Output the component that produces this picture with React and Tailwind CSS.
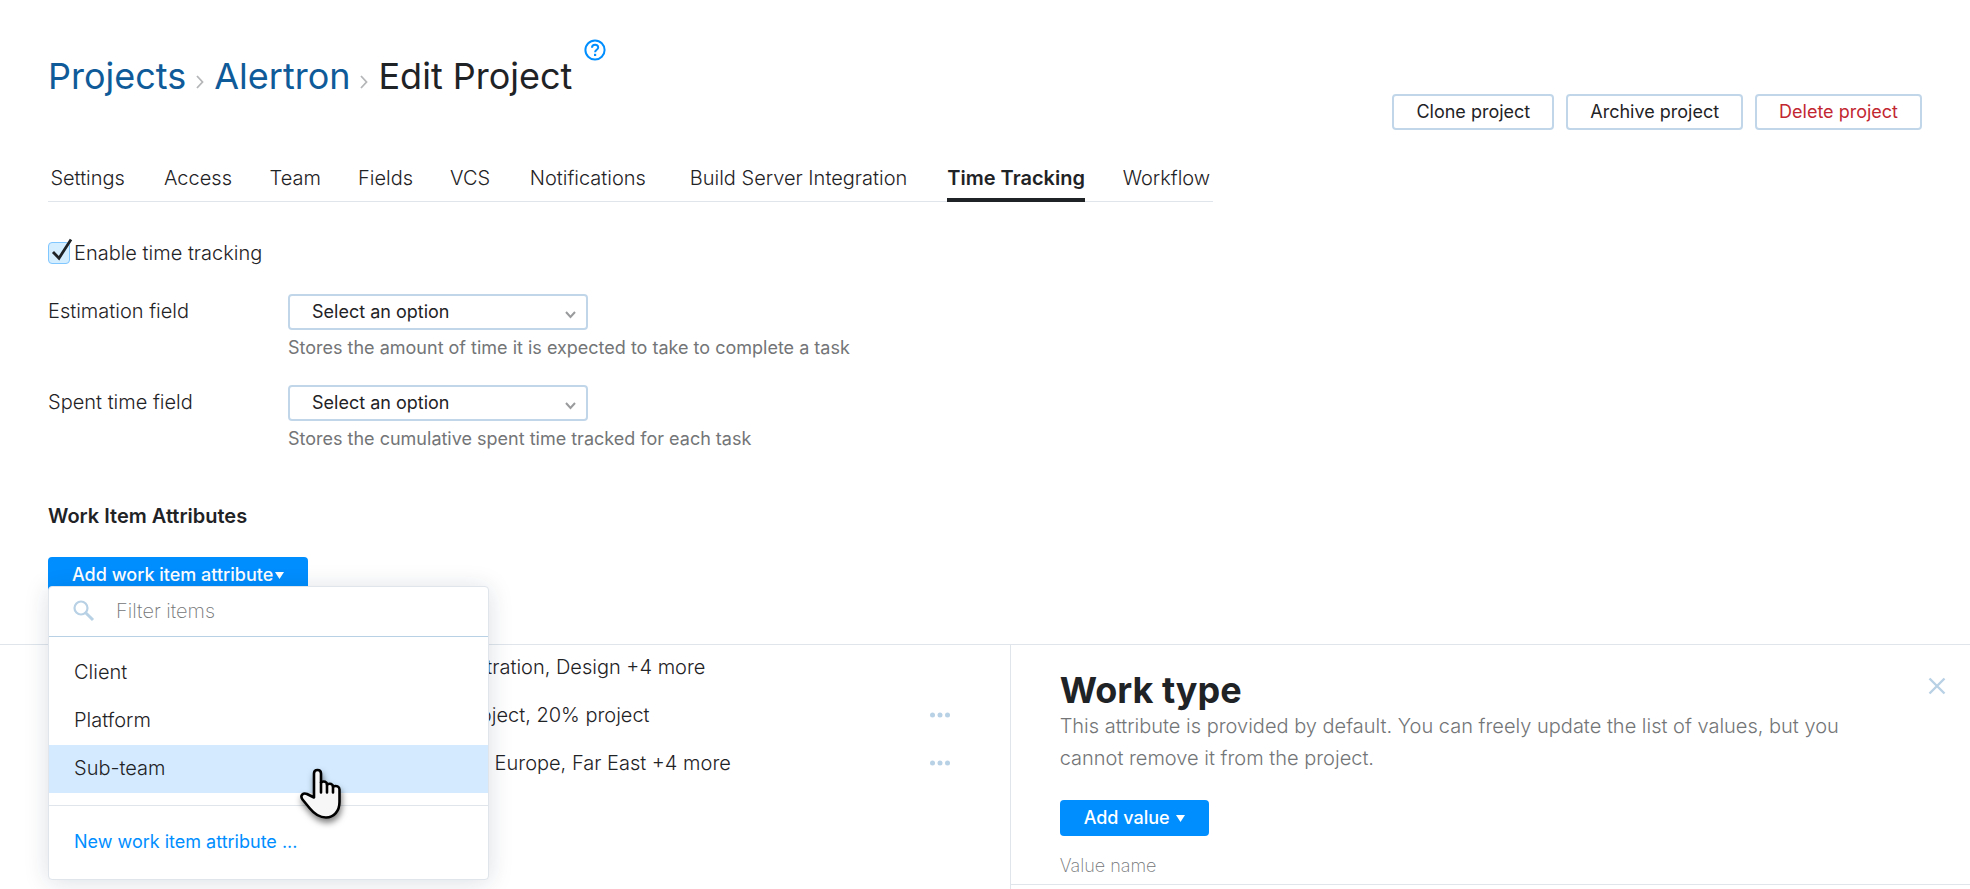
const tabs = [
  'Settings',
  'Access',
  'Team',
  'Fields',
  'VCS',
  'Notifications',
  'Build Server Integration',
  'Time Tracking',
  'Workflow',
];

const fields = [
  {
    id: 'estimation',
    label: 'Estimation field',
    hint: 'Stores the amount of time it is expected to take to complete a task',
  },
  {
    id: 'spent-time',
    label: 'Spent time field',
    hint: 'Stores the cumulative spent time tracked for each task',
  },
];

const attributes = [
  { values: 'Administration, Design +4 more', removable: false },
  { values: '80% project, 20% project', removable: true },
  { values: 'Canada, Europe, Far East +4 more', removable: true },
];

const menuItems = ['Client', 'Platform', 'Sub-team'];

const Crumb = () => (
  <svg className="mx-2.5 mt-3 h-4 w-2 shrink-0" viewBox="0 0 8 16" fill="none" stroke="#b4b6b8" strokeWidth="1.800">
    <path d="M1 2l5.500 6L1 14" />
  </svg>
);

const Caret = ({ className }) => (
  <svg className={className} width="9" height="7" viewBox="0 0 9 7" fill="currentColor">
    <path d="M0 0h9L4.500 7z" />
  </svg>
);

const OutlineButton = ({ children, danger }) => (
  <button
    type="button"
    className={`h-9 rounded border-2 border-[#c1d7e9] bg-white px-[22px] text-lg leading-6 font-normal flex items-center ${
      danger ? 'text-[#c22731]' : 'text-[#1f2326]'
    }`}
  >
    {children}
  </button>
);

const HandCursor = () => (
  <svg
    className="pointer-events-none absolute left-[251px] top-[23px] drop-shadow-[1px_4px_3px_rgba(0,0,0,0.5)]"
    width="42"
    height="52"
    viewBox="0 0 42 52"
    fill="#f7f7f7"
    stroke="#000"
    strokeWidth="2.6"
    strokeLinejoin="round"
    strokeLinecap="round"
  >
    <path d="M14 29.500V5.500C14 .8 21 .8 21 5.500V14.500C24 12.500 27 14 27 16.500C30 14.800 33 16 33 18.500C36.500 17.200 39.500 18.500 39.500 21.500V34C39.500 43 34 49.500 26 49.500C18 49.500 13.500 45 9.500 40L2.500 31.500C-.5 27 3.500 24.500 7 26Z" />
    <path d="M21 14.500v10M27 16.500v8M33 18.500v6" />
  </svg>
);

const AttributeMenu = () => (
  <div className="absolute left-0 top-[29px] z-10 w-[441px] rounded border border-[#dfe5eb] bg-white shadow-[0_2px_24px_rgba(0,42,76,0.15)]">
    <div className="flex h-[50px] items-center border-b border-[#b8d1e5] pb-0.5 pl-6">
      <svg width="22" height="22" viewBox="0 0 22 22" fill="none" stroke="#b8d1e5" strokeWidth="2.200">
        <circle cx="8" cy="8" r="6.500" />
        <path d="M12.700 12.700L20 20" strokeWidth="3" />
      </svg>
      <input
        type="text"
        aria-label="Filter items"
        placeholder="Filter items"
        className="ml-[21px] w-72 bg-transparent text-xl leading-6 font-extralight outline-none placeholder:text-[#737577]"
      />
    </div>
    <ul className="pt-3 pb-3">
      {menuItems.map((item) => (
        <li key={item} className="relative">
          <button
            type="button"
            className={`h-12 w-full pb-0.5 pl-[25px] text-left text-xl leading-6 ${item === 'Sub-team' ? 'bg-[#d4ebff]' : ''}`}
          >
            {item}
          </button>
          {item === 'Sub-team' && <HandCursor />}
        </li>
      ))}
    </ul>
    <div className="border-t border-[#dfe5eb] pt-6 pb-[25px] pl-[25px]">
      <button type="button" className="text-lg leading-6 font-normal text-[#008eff]">
        New work item attribute ...
      </button>
    </div>
  </div>
);

export default function App() {
  return (
    <div className="flex min-h-screen flex-col bg-white font-['Inter',sans-serif] font-light text-[#1f2326]">
      <div className="px-12 pt-[54px]">
        <header className="flex items-start justify-between">
          <h1 className="relative flex items-center text-4xl leading-[44px] font-normal">
            <a href="#projects" className="text-[#0f5b99]">Projects</a>
            <Crumb />
            <a href="#alertron" className="text-[#0f5b99]">Alertron</a>
            <Crumb />
            <span>Edit Project</span>
            <a href="#help" aria-label="Help" className="absolute -top-[15px] left-full ml-3">
              <svg width="22" height="22" viewBox="0 0 22 22" fill="none" stroke="#008eff" strokeWidth="2">
                <circle cx="11" cy="11" r="9.600" />
                <path d="M8 8.800C8 4.600 14.200 4.800 14.200 8.500C14.200 10.800 11.100 10.800 11.100 13.300" strokeWidth="2" />
                <path d="M11.100 14.800v2.200" strokeWidth="2.200" />
              </svg>
            </a>
          </h1>
          <div className="mt-10 flex gap-3">
            <OutlineButton>Clone project</OutlineButton>
            <OutlineButton>Archive project</OutlineButton>
            <OutlineButton danger>Delete project</OutlineButton>
          </div>
        </header>

        {/* The hidden bold copy keeps a tab's width the same when it gets selected */}
        <nav className="mt-9 flex w-fit gap-[35px] border-b border-[#dfe5eb] text-xl leading-6">
          {tabs.map((tab) => (
            <a
              key={tab}
              href="#tab"
              data-label={tab}
              className={`flex flex-col items-center after:invisible after:h-0 after:overflow-hidden after:font-semibold after:content-[attr(data-label)] ${
                tab === 'Time Tracking' ? '-mb-px border-b-4 border-[#1f2326] pb-2 font-semibold' : 'pb-[11px]'
              }`}
            >
              {tab}
            </a>
          ))}
        </nav>

        <form>
          <div className="mt-[39px] flex items-center gap-1 text-xl leading-6">
            <span className="relative h-[22px] w-[22px]">
              <input
                id="enable"
                type="checkbox"
                defaultChecked
                className="block h-[22px] w-[22px] appearance-none rounded border border-[#80c6ff] bg-[#d4edff]"
              />
              <svg className="pointer-events-none absolute -top-1 left-0" width="26" height="26" viewBox="0 0 26 26" fill="none" stroke="#1f2326" strokeWidth="2.800">
                <path d="M5 14l6 6.200L23 1.500" />
              </svg>
            </span>
            <label htmlFor="enable">Enable time tracking</label>
          </div>

          <div className="mt-[29px] flex flex-col gap-[25px]">
            {fields.map((field) => (
              <div key={field.id} className="flex">
                <label htmlFor={field.id} className="w-60 pt-[5px] text-xl leading-6">
                  {field.label}
                </label>
                <div>
                  <div className="relative w-[300px]">
                    <select
                      id={field.id}
                      className="block h-9 w-full appearance-none rounded border-2 border-[#c1d7e9] bg-white pl-[22px] text-lg leading-6 font-normal"
                    >
                      <option>Select an option</option>
                    </select>
                    <svg className="pointer-events-none absolute top-[17px] right-3" width="11" height="8" viewBox="0 0 11 8" fill="none" stroke="#999b9d" strokeWidth="2">
                      <path d="M1 1l4.500 5L10 1" />
                    </svg>
                  </div>
                  <p className="mt-1.5 text-lg leading-6 font-normal text-[#737577]">{field.hint}</p>
                </div>
              </div>
            ))}
          </div>
        </form>

        <h2 className="mt-[53px] text-xl leading-6 font-semibold">Work Item Attributes</h2>
        <div className="relative mt-[29px] w-fit">
          <button
            type="button"
            className="flex h-9 items-center rounded bg-[#008eff] px-6 text-lg leading-6 font-medium text-white"
          >
            Add work item attribute
            <Caret className="ml-0.5" />
          </button>
          <AttributeMenu />
        </div>
      </div>

      <div className="mt-[51px] flex flex-1 border-t border-[#dfe5eb]">
        <ul className="w-[51.25%] pr-[60px] pl-[412px] text-xl leading-6">
          {attributes.map((row) => (
            <li key={row.values} className="flex h-12 items-center justify-between pb-1">
              {row.values}
              {row.removable && (
                <button type="button" aria-label="More actions">
                  <svg width="20" height="6" viewBox="0 0 20 6" fill="#b8d1e5">
                    <circle cx="2.500" cy="3" r="2.500" />
                    <circle cx="10" cy="3" r="2.500" />
                    <circle cx="17.500" cy="3" r="2.500" />
                  </svg>
                </button>
              )}
            </li>
          ))}
        </ul>

        <section className="flex-1 border-l border-[#dfe5eb] pt-[25px]">
          <div className="flex items-start justify-between pr-6 pl-[49px]">
            <div className="max-w-[800px]">
              <h2 className="text-4xl leading-10 font-bold">Work type</h2>
              <p className="text-xl leading-8 text-[#737577]">
                This attribute is provided by default. You can freely update the list of values, but you cannot
                remove it from the project.
              </p>
            </div>
            <button type="button" aria-label="Close" className="mt-[7px]">
              <svg width="18" height="18" viewBox="0 0 18 18" fill="none" stroke="#b8d1e5" strokeWidth="2.400">
                <path d="M1.500 1.500l15 15M16.500 1.500l-15 15" />
              </svg>
            </button>
          </div>
          <button
            type="button"
            className="mt-[26px] ml-[49px] flex h-9 items-center rounded bg-[#008eff] px-6 text-lg leading-6 font-medium text-white"
          >
            Add value
            <Caret className="ml-1.5" />
          </button>
          <table className="mt-4 w-full">
            <thead>
              <tr className="border-b border-[#dfe5eb]">
                <th className="pt-0.5 pb-1.5 pl-[49px] text-left text-lg leading-6 font-extralight text-[#737577]">
                  Value name
                </th>
              </tr>
            </thead>
          </table>
        </section>
      </div>
    </div>
  );
}
